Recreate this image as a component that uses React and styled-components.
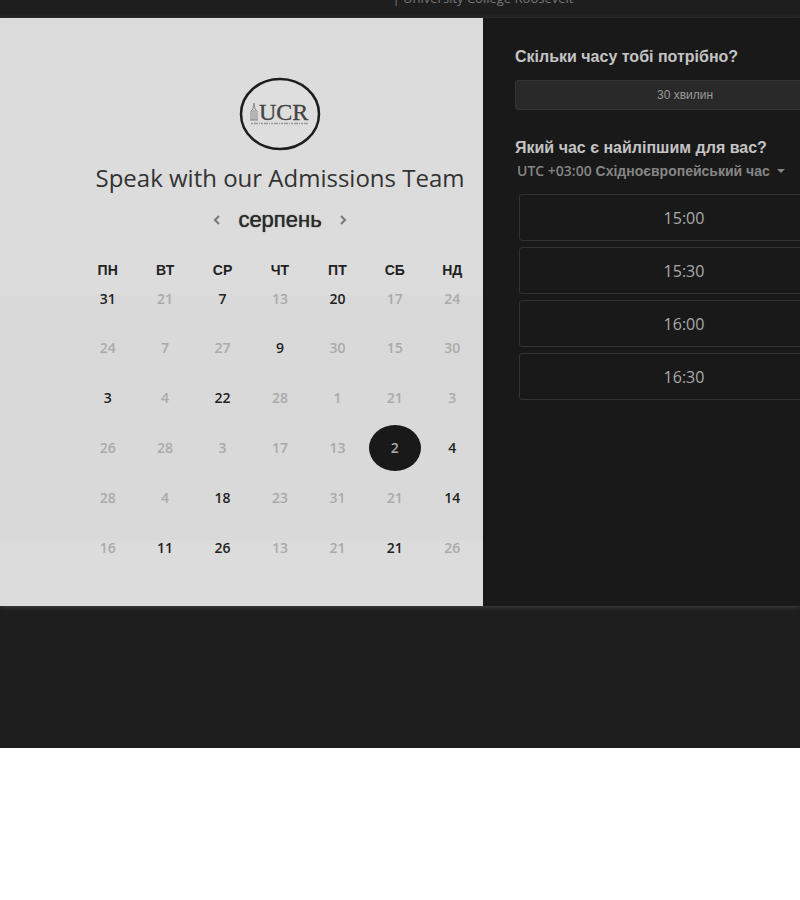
import React, { useState } from "react";
import styled, { createGlobalStyle } from "styled-components";

const GlobalStyle = createGlobalStyle`
  * { box-sizing: border-box; }
  body {
    margin: 0;
    background: #fff;
    font-family: "Liberation Sans", Arial, sans-serif;
    -webkit-font-smoothing: antialiased;
  }
  button { font: inherit; }
`;

const Page = styled.div`
  background: #1e1e1e;
  overflow: hidden;
  padding-bottom: 142px;
`;

const TopBar = styled.header`
  display: flex;
  align-items: flex-end;
  justify-content: center;
  height: 18px;
  padding: 0 0 12px 166px;
  overflow: hidden;
  color: #777;
  font-family: "Open Sans", sans-serif;
  font-size: 13px;
  line-height: 16px;
  white-space: nowrap;
`;

const Scheduler = styled.main`
  display: grid;
  grid-template-columns: minmax(0, 483fr) minmax(0, 317fr);
  box-shadow: 0 1px 5px #444;
`;

const CalendarPanel = styled.section`
  display: flex;
  flex-direction: column;
  align-items: flex-end;
  padding: 0 2px 31px 0;
  background: linear-gradient(#dcdcdc 277px, #d9d9d9 278px, #d9d9d9 522px, #dcdcdc 523px);
`;

const CalendarColumn = styled.div`
  display: flex;
  flex-direction: column;
  align-items: center;
  width: 402px;
  padding-top: 59px;
`;

const Logo = styled.svg`
  display: block;
  width: 82px;
  height: 74px;
`;

const Title = styled.h1`
  margin: 10px 0 0;
  color: #333;
  font-family: "Open Sans", sans-serif;
  font-size: 24px;
  font-weight: 400;
  line-height: 34px;
  white-space: nowrap;
`;

const MonthBar = styled.div`
  display: flex;
  align-items: center;
  justify-content: center;
  gap: 13px;
  height: 30px;
  margin-top: 10px;
`;

const MonthName = styled.h2`
  margin: 0;
  color: #2b2b2b;
  font-size: 22px;
  font-weight: 400;
  line-height: 28px;
  text-shadow: 0 0 1px #2b2b2b;
`;

const ArrowButton = styled.button`
  display: flex;
  padding: 4px;
  border: 0;
  background: none;
  color: #777;
  cursor: pointer;
`;

const MonthTable = styled.table`
  width: 100%;
  margin-top: 23px;
  border-collapse: collapse;
  table-layout: fixed;
`;

const Weekday = styled.th`
  height: 24px;
  padding: 0;
  color: #222;
  font-size: 14px;
  font-weight: 700;
  line-height: 24px;
  text-align: center;
`;

const DayCell = styled.td`
  height: 50px;
  padding: 0;
  text-align: center;
  vertical-align: top;
`;

const DayButton = styled.button`
  width: 52px;
  height: 46px;
  padding: 0;
  border: 0;
  border-radius: 50%;
  background: ${(p) => (p.$selected ? "#191919" : "none")};
  color: ${(p) => (p.$selected ? "#aaa" : p.disabled ? "#aaa" : "#222")};
  font-family: "Open Sans", sans-serif;
  font-size: 14px;
  font-weight: 600;
  line-height: 20px;
  cursor: ${(p) => (p.disabled ? "default" : "pointer")};
`;

const Weeks = styled.tbody`
  tr:first-child ${DayCell} {
    height: 43px;
  }
  tr:first-child ${DayButton} {
    height: 34px;
  }
`;

const TimePanel = styled.aside`
  padding: 29px 0 0 32px;
  overflow: hidden;
  background: #191919;
`;

const TimeContent = styled.div`
  min-width: 340px;
`;

const Question = styled.h3`
  margin: 0;
  color: #c4c4c4;
  font-size: 16px;
  font-weight: 700;
  line-height: 20px;
`;

const DurationButton = styled.button`
  display: block;
  width: 100%;
  height: 30px;
  margin: 13px 0 28px;
  padding: 0;
  border: 1px solid #353535;
  border-radius: 3px;
  background: #292929;
  color: #999;
  font-size: 12px;
  cursor: pointer;
`;

const ZoneButton = styled.button`
  display: flex;
  align-items: center;
  gap: 7px;
  margin-top: 3px;
  padding: 0 2px;
  border: 0;
  background: none;
  color: #858585;
  font-size: 14px;
  font-weight: 700;
  line-height: 20px;
  white-space: nowrap;
  cursor: pointer;
`;

const ZoneOffset = styled.span`
  font-family: "Open Sans", sans-serif;
  font-weight: 600;
`;

const SlotList = styled.div`
  display: grid;
  gap: 6px;
  padding: 13px 6px 0 4px;
`;

const SlotButton = styled.button`
  height: 47px;
  padding: 0;
  border: 1px solid #333;
  border-radius: 3px;
  background: #191919;
  color: #aaa;
  font-family: "Open Sans", sans-serif;
  font-size: 16px;
  line-height: 20px;
  cursor: pointer;
`;

const weekdays = ["ПН", "ВТ", "СР", "ЧТ", "ПТ", "СБ", "НД"];

const weeks = [
  [[31, 1], [21], [7, 1], [13], [20, 1], [17], [24]],
  [[24], [7], [27], [9, 1], [30], [15], [30]],
  [[3, 1], [4], [22, 1], [28], [1], [21], [3]],
  [[26], [28], [3], [17], [13], [2, 1], [4, 1]],
  [[28], [4], [18, 1], [23], [31], [21], [14, 1]],
  [[16], [11, 1], [26, 1], [13], [21], [21, 1], [26]],
];

const slots = ["15:00", "15:30", "16:00", "16:30"];

function Arrow({ d }) {
  return (
    <svg width="8" height="10" viewBox="0 0 8 10" fill="none" stroke="currentColor" strokeWidth="2" aria-hidden="true">
      <path d={d} />
    </svg>
  );
}

function CollegeLogo() {
  return (
    <Logo viewBox="0 0 82 74" role="img" aria-label="UCR">
      <ellipse cx="41" cy="37" rx="39" ry="35" fill="#dedede" stroke="#1d1d1d" strokeWidth="2.5" />
      <path d="M12 43V34l2-2 1-6 1 6 2 2v9M14 33v10M16 33v10M11 43h8" fill="none" stroke="#888" strokeWidth="1" />
      <text x="20" y="43" fill="#444" stroke="#444" strokeWidth="0.3" fontFamily="Liberation Serif, serif" fontSize="24">UCR</text>
      <path d="M12 46.5H70" stroke="#999" strokeWidth="1.5" strokeDasharray="2 1 4 1 1 1" />
    </Logo>
  );
}

export default function App() {
  const [selected, setSelected] = useState("3-5");

  return (
    <>
      <GlobalStyle />
      <Page>
        <TopBar>| University College Roosevelt</TopBar>
        <Scheduler>
          <CalendarPanel>
            <CalendarColumn>
              <CollegeLogo />
              <Title>Speak with our Admissions Team</Title>
              <MonthBar>
                <ArrowButton aria-label="Попередній місяць"><Arrow d="M6 1 2 5l4 4" /></ArrowButton>
                <MonthName>серпень</MonthName>
                <ArrowButton aria-label="Наступний місяць"><Arrow d="m2 1 4 4-4 4" /></ArrowButton>
              </MonthBar>
              <MonthTable>
                <thead>
                  <tr>{weekdays.map((day) => <Weekday key={day} scope="col">{day}</Weekday>)}</tr>
                </thead>
                <Weeks>
                  {weeks.map((week, row) => (
                    <tr key={row}>
                      {week.map(([day, available], col) => {
                        const id = `${row}-${col}`;
                        return (
                          <DayCell key={id}>
                            <DayButton
                              disabled={!available}
                              $selected={selected === id}
                              aria-pressed={selected === id}
                              onClick={() => setSelected(id)}
                            >
                              {day}
                            </DayButton>
                          </DayCell>
                        );
                      })}
                    </tr>
                  ))}
                </Weeks>
              </MonthTable>
            </CalendarColumn>
          </CalendarPanel>
          <TimePanel>
            <TimeContent>
              <Question>Скільки часу тобі потрібно?</Question>
              <DurationButton>30 хвилин</DurationButton>
              <Question>Який час є найліпшим для вас?</Question>
              <ZoneButton>
                <span><ZoneOffset>UTC +03:00</ZoneOffset> Східноєвропейський час</span>
                <svg width="8" height="4" viewBox="0 0 8 4" aria-hidden="true"><path d="M0 0h8L4 4z" fill="currentColor" /></svg>
              </ZoneButton>
              <SlotList>
                {slots.map((time) => <SlotButton key={time}>{time}</SlotButton>)}
              </SlotList>
            </TimeContent>
          </TimePanel>
        </Scheduler>
      </Page>
    </>
  );
}
